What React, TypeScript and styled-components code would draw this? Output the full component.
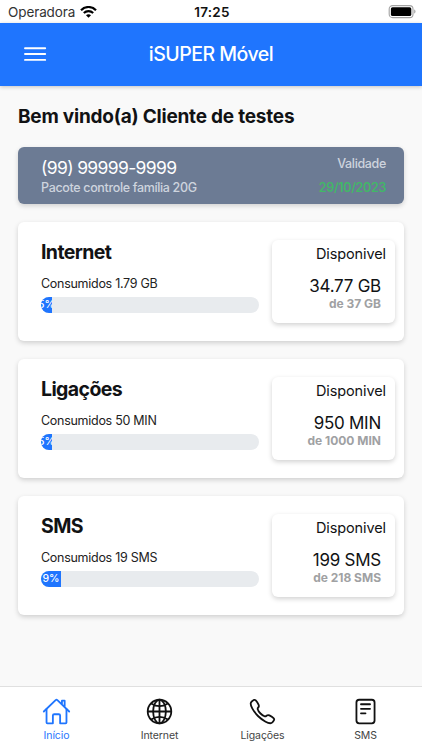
import React from "react";
import styled, { createGlobalStyle } from "styled-components";
import {
  IoHomeOutline,
  IoGlobeOutline,
  IoCallOutline,
  IoReaderOutline,
} from "react-icons/io5";

const GlobalStyle = createGlobalStyle`
  * { box-sizing: border-box; }
  body { margin: 0; background: #f9f9f9; }
`;

const Screen = styled.div`
  display: flex;
  flex-direction: column;
  width: 422px;
  height: 750px;
  overflow: hidden;
  background: #f9f9f9;
  color: #111214;
  font-family: Inter, "Liberation Sans", sans-serif;
  white-space: nowrap;
`;

const StatusBar = styled.div`
  display: grid;
  grid-template-columns: 1fr auto 1fr;
  align-items: center;
  flex: none;
  height: 23px;
  padding: 1px 6px 0 8px;
  background: #fff;
`;

const Carrier = styled.div`
  display: flex;
  align-items: center;
  gap: 5px;
  font-size: 13.5px;
  letter-spacing: -0.1px;
  color: #333;
`;

const Clock = styled.div`
  font-size: 13.5px;
  font-weight: 600;
  letter-spacing: 0.25px;
  color: #111;
`;

const BatterySlot = styled.div`
  display: flex;
  justify-content: flex-end;
  margin-top: -1px;
`;

const Header = styled.header`
  display: grid;
  grid-template-columns: 46px 1fr 46px;
  align-items: center;
  flex: none;
  height: 62.5px;
  padding: 0 12px;
  background: #1f75fe;
  color: #fff;
  box-shadow: 0 1px 4px rgba(0, 0, 0, 0.22);
`;

const MenuButton = styled.button`
  display: flex;
  justify-content: center;
  padding: 0;
  border: 0;
  background: none;
  color: inherit;
`;

const HeaderTitle = styled.div`
  font-size: 19.5px;
  line-height: 24px;
  font-weight: 500;
  letter-spacing: -0.5px;
  text-align: center;
`;

const Content = styled.main`
  display: flex;
  flex-direction: column;
  flex: 1;
  gap: 18px;
  padding: 18.5px 18px 0;
`;

const Welcome = styled.h1`
  margin: 0;
  height: 24.5px;
  font-size: 19px;
  line-height: 26px;
  font-weight: 650;
  letter-spacing: -0.22px;
`;

const PlanCard = styled.section`
  display: flex;
  justify-content: space-between;
  height: 57px;
  padding: 9px 18px 0 23px;
  border-radius: 6px;
  background: #6c7b94;
  box-shadow: 0 2px 5px rgba(0, 0, 0, 0.16);
`;

const PlanColumn = styled.div<{ $end?: boolean }>`
  display: flex;
  flex-direction: column;
  align-items: ${(p) => (p.$end ? "flex-end" : "flex-start")};
`;

const PhoneNumber = styled.div`
  font-size: 17.5px;
  line-height: 23px;
  letter-spacing: -0.65px;
  color: #fff;
`;

const PlanName = styled.div`
  font-size: 12.5px;
  line-height: 17px;
  font-weight: 500;
  letter-spacing: -0.34px;
  color: #ced4de;
`;

const ValidityLabel = styled(PlanName)`
  height: 23.5px;
  margin-top: -0.5px;
`;

const ValidityDate = styled(PlanName)`
  font-weight: 600;
  color: #42b767;
`;

const UsageCard = styled.section`
  display: flex;
  justify-content: space-between;
  height: 119px;
  padding: 18px 9px 0 23px;
  border-radius: 6px;
  background: #fff;
  box-shadow: 0 2px 5px rgba(0, 0, 0, 0.17);
`;

const Usage = styled.div`
  width: 218px;
`;

const UsageTitle = styled.h2`
  margin: 0;
  font-size: 19.5px;
  line-height: 25px;
  font-weight: 650;
  letter-spacing: -0.6px;
`;

const Consumed = styled.div`
  margin-top: 10px;
  font-size: 12.5px;
  line-height: 17px;
  letter-spacing: -0.28px;
  color: #222;
`;

const Track = styled.div`
  display: flex;
  height: 16px;
  margin-top: 5px;
  border-radius: 8px;
  overflow: hidden;
  background: #e8ebee;
`;

const Fill = styled.div`
  display: flex;
  align-items: center;
  justify-content: center;
  flex: none;
  overflow: hidden;
  background: #1f75fe;
  color: #fff;
  font-size: 10.5px;
  line-height: 16px;
  font-weight: 500;
  letter-spacing: -0.1px;
`;

const Available = styled.div`
  display: flex;
  flex-direction: column;
  align-items: flex-end;
  width: 123px;
  height: 83px;
  padding: 4px 9px 0 0;
  border-radius: 6px;
  background: #fff;
  box-shadow: 0 2px 5px rgba(0, 0, 0, 0.18);
`;

const AvailableLabel = styled.div`
  font-size: 14.5px;
  line-height: 19px;
  letter-spacing: -0.1px;
`;

const Amount = styled.div`
  margin: 12px 5px 0 0;
  font-size: 17px;
  line-height: 22px;
  letter-spacing: -0.25px;
`;

const Total = styled.div`
  margin: -1px 5px 0 0;
  font-size: 12px;
  line-height: 15px;
  font-weight: 700;
  color: #a0a1a3;
`;

const TabBar = styled.nav`
  display: grid;
  grid-template-columns: repeat(4, 103px);
  justify-content: center;
  flex: none;
  height: 64px;
  padding-top: 10px;
  border-top: 1px solid #e0e0e0;
  background: #fff;
`;

const Tab = styled.div<{ $active?: boolean }>`
  display: flex;
  flex-direction: column;
  align-items: center;
  gap: 3px;
  font-size: 10.5px;
  line-height: 14px;
  letter-spacing: -0.1px;
  color: ${(p) => (p.$active ? "#1f75fe" : "#444")};

  svg {
    display: block;
    width: 29px;
    height: 29px;
    color: ${(p) => (p.$active ? "#1f75fe" : "#111")};
  }
`;

const WifiIcon = () => (
  <svg width="17" height="12" viewBox="0 0 17 12" fill="none" stroke="#000">
    <path d="M1 4.2C5.2-.05 11.8-.05 16 4.2" strokeWidth="2.2" />
    <path d="M3.8 7.1c2.7-2.6 6.7-2.6 9.4 0" strokeWidth="2.1" />
    <path d="M8.5 11.8 6 9.3c1.4-1.35 3.6-1.35 5 0z" fill="#000" stroke="none" />
  </svg>
);

const BatteryIcon = () => (
  <svg width="28" height="14" viewBox="0 0 28 14">
    <rect x="1.2" y=".6" width="23.8" height="12" rx="3.4" fill="none" stroke="#a3a3a3" strokeWidth="1.1" />
    <rect x="2.9" y="2.3" width="20.4" height="8.7" rx="1.6" fill="#000" />
    <path d="M26.2 4.6c1.7.5 1.7 3.5 0 4z" fill="#a3a3a3" />
  </svg>
);

const MenuIcon = () => (
  <svg width="24" height="16" viewBox="0 0 24 16" stroke="currentColor" strokeWidth="1.9" strokeLinecap="round">
    <path d="M2 2.3h20.2M2 8h20.2M2 13.9h20.2" />
  </svg>
);

const usages = [
  { title: "Internet", consumed: "1.79 GB", percent: 5, left: "34.77 GB", total: "37 GB" },
  { title: "Ligações", consumed: "50 MIN", percent: 5, left: "950 MIN", total: "1000 MIN" },
  { title: "SMS", consumed: "19 SMS", percent: 9, left: "199 SMS", total: "218 SMS" },
];

const tabs = [
  { label: "Início", Icon: IoHomeOutline, active: true },
  { label: "Internet", Icon: IoGlobeOutline },
  { label: "Ligações", Icon: IoCallOutline },
  { label: "SMS", Icon: IoReaderOutline },
];

export default function App() {
  return (
    <Screen>
      <GlobalStyle />
      <StatusBar>
        <Carrier>
          Operadora <WifiIcon />
        </Carrier>
        <Clock>17:25</Clock>
        <BatterySlot>
          <BatteryIcon />
        </BatterySlot>
      </StatusBar>
      <Header>
        <MenuButton aria-label="Menu">
          <MenuIcon />
        </MenuButton>
        <HeaderTitle>iSUPER Móvel</HeaderTitle>
      </Header>
      <Content>
        <Welcome>Bem vindo(a) Cliente de testes</Welcome>
        <PlanCard>
          <PlanColumn>
            <PhoneNumber>(99) 99999-9999</PhoneNumber>
            <PlanName>Pacote controle família 20G</PlanName>
          </PlanColumn>
          <PlanColumn $end>
            <ValidityLabel>Validade</ValidityLabel>
            <ValidityDate>29/10/2023</ValidityDate>
          </PlanColumn>
        </PlanCard>
        {usages.map((u) => (
          <UsageCard key={u.title}>
            <Usage>
              <UsageTitle>{u.title}</UsageTitle>
              <Consumed>Consumidos {u.consumed}</Consumed>
              <Track>
                <Fill style={{ width: `${u.percent}%` }}>{u.percent}%</Fill>
              </Track>
            </Usage>
            <Available>
              <AvailableLabel>Disponivel</AvailableLabel>
              <Amount>{u.left}</Amount>
              <Total>de {u.total}</Total>
            </Available>
          </UsageCard>
        ))}
      </Content>
      <TabBar>
        {tabs.map(({ label, Icon, active }) => (
          <Tab key={label} $active={active}>
            <Icon />
            {label}
          </Tab>
        ))}
      </TabBar>
    </Screen>
  );
}
